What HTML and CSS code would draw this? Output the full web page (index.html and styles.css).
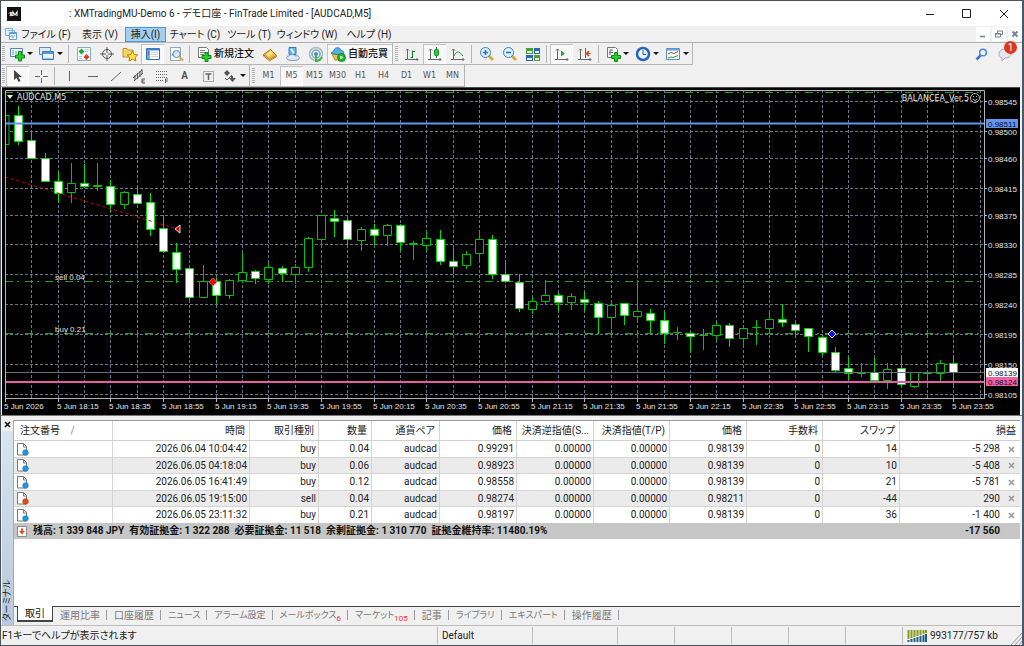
FILE: index.html
```html
<!DOCTYPE html>
<html lang="ja">
<head>
<meta charset="utf-8">
<meta name="viewport" content="width=device-width, initial-scale=1">
<title>XMTradingMU-Demo 6 - デモ口座 - FinTrade Limited - [AUDCAD,M5]</title>
<link rel="stylesheet" href="styles.css">
</head>
<body>
<div class="window">
  <header class="titlebar">
    <svg class="app-logo" width="14" height="14" viewBox="0 0 14 14" aria-hidden="true"><rect width="14" height="14" fill="#111"/><path d="M3 5l2 4M5 5L3 9M6 9V5l2 3 2-3v4" stroke="#eee" stroke-width="1.2" fill="none"/><path d="M1 6.500h2" stroke="#e22"/></svg>
    <h1 class="title">: XMTradingMU-Demo 6 - デモ口座 - FinTrade Limited - [AUDCAD,M5]</h1>
    <div class="caption">
      <button aria-label="最小化"><svg width="10" height="10" viewBox="0 0 10 10"><path d="M1 5.500h8" stroke="#222"/></svg></button>
      <button aria-label="最大化"><svg width="10" height="10" viewBox="0 0 10 10"><path d="M.5.5h8v8h-8z" stroke="#222" fill="none"/></svg></button>
      <button aria-label="閉じる"><svg width="10" height="10" viewBox="0 0 10 10"><path d="M1 1l8 8M9 1L1 9" stroke="#222"/></svg></button>
    </div>
  </header>

  <nav class="menubar">
    <svg width="12" height="12" viewBox="0 0 12 12" aria-hidden="true"><path d="M.5.5h7v7h-7zM2.500 2.500h7v7" fill="#eaf4fd" stroke="#7ab0e4"/><path d="M4.500 4.500h7v7h-7z" fill="#fff" stroke="#5b9be0"/><path d="M4 5.500h8" stroke="#5b9be0"/><path d="M5.500 9l1.500-2 1 3 2-3" stroke="#7ab0e4" fill="none"/></svg>
    <button class="menu-item wide">ファイル (F)</button>
    <button class="menu-item">表示 (V)</button>
    <button class="menu-item active">挿入(I)</button>
    <button class="menu-item wide">チャート (C)</button>
    <button class="menu-item">ツール (T)</button>
    <button class="menu-item widest">ウィンドウ (W)</button>
    <button class="menu-item wide">ヘルプ (H)</button>
    <div class="mdi">
      <button aria-label="チャートを最小化"><svg width="8" height="8" viewBox="0 0 8 8"><path d="M1 6.500h5" stroke="#6d7f92" stroke-width="1.500"/></svg></button>
      <button aria-label="チャートを元に戻す"><svg width="8" height="8" viewBox="0 0 8 8"><path d="M2.500 3V1h5v3.500H6M.5 3.500h5v3.500h-5zM.5 4h5" stroke="#6d7f92" fill="none"/></svg></button>
      <button aria-label="チャートを閉じる"><svg width="8" height="8" viewBox="0 0 8 8"><path d="M1.500 1.500l5 5M6.500 1.500l-5 5" stroke="#6d7f92" stroke-width="1.800"/></svg></button>
    </div>
  </nav>

  <div class="toolrow">
    <div class="toolbar">
      <span class="grip"></span>
      <button class="tool drop" aria-label="新規チャート"><svg width="16" height="16" viewBox="0 0 16 16"><path d="M1.500 2.500h12v8h-12z" fill="#eef5fb" stroke="#5685b8"/><path d="M4 9V4M7 8V5" stroke="#68a0cc"/><path d="M9.500 5.500h3v3.500h3v3h-3v3h-3v-3h-3v-3h3z" fill="#27d02c" stroke="#0b8a12"/></svg><i class="arrow"></i></button>
      <button class="tool drop" aria-label="表示プロファイル"><svg width="16" height="16" viewBox="0 0 16 16"><path d="M.5 1.500h11v7h-11z" fill="#dcebf8" stroke="#5a8cc0"/><path d="M3.500 5.500h11v8h-11z" fill="#e9f3fb" stroke="#4679b2"/><path d="M4 7h10" stroke="#4d9ee0" stroke-width="2"/><path d="M4 12.500h10" stroke="#a7c1da"/></svg><i class="arrow"></i></button>
      <span class="sep"></span>
      <button class="tool" aria-label="気配値表示"><svg width="16" height="16" viewBox="0 0 16 16"><path d="M1.500 1.500h13v13h-13z" fill="#f8fcff" stroke="#8aaccc"/><path d="M5.500 2.500l3 3-3 3-3-3z" fill="#22a83a"/><path d="M10.500 8l3 3-3 3-3-3z" fill="#e23b21"/><path d="M9 3.500h4M9 5.500h3M3 10.500h3M3 12.500h3" stroke="#b9cee2"/></svg></button>
      <button class="tool" aria-label="データウィンドウ"><svg width="16" height="16" viewBox="0 0 16 16"><circle cx="8" cy="8" r="4.500" fill="none" stroke="#555"/><path d="M8 1v6M8 9v6M1 8h6M9 8h6" stroke="#555"/></svg></button>
      <button class="tool" aria-label="ナビゲーター"><svg width="16" height="16" viewBox="0 0 16 16"><path d="M1 2.500h4l1 1.500h5v7H1z" fill="#f7d46c" stroke="#c39421"/><path d="M10.500 5l1.700 3.500 3.500.4-2.600 2.500.8 3.600-3.400-1.800L7 15l.8-3.600-2.600-2.500 3.500-.4z" fill="#ffe04d" stroke="#b97d08"/></svg></button>
      <button class="tool pressed" aria-label="ターミナル"><svg width="16" height="16" viewBox="0 0 16 16"><path d="M1.500 2.500h13v11h-13z" fill="#fff" stroke="#2f6fb4"/><path d="M2 3.500h12" stroke="#3d86cf" stroke-width="2"/><path d="M2 4h3v9H2z" fill="#69aee8"/><path d="M6 6.500h7M6 8.500h7M6 10.500h7" stroke="#c8d8ea"/><path d="M3 6h1M3 8h1" stroke="#b11"/></svg></button>
      <button class="tool" aria-label="ストラテジーテスター"><svg width="16" height="16" viewBox="0 0 16 16"><path d="M2.500 1.500h10v13h-10z" fill="#f6fafc" stroke="#92a5b8"/><path d="M4 10l2-5 2 3 2-4" stroke="#78a58c" fill="none"/><circle cx="8.500" cy="8" r="3.500" fill="#cfe5f8" fill-opacity=".8" stroke="#6a96c4"/><path d="M11 10.500l4 4" stroke="#d9aa35" stroke-width="2"/></svg></button>
      <span class="sep"></span>
      <button class="tool labelled"><svg width="16" height="16" viewBox="0 0 16 16" aria-hidden="true"><path d="M2.500 1.500h8l2 2v8h-10z" fill="#fff" stroke="#777"/><path d="M4 4.500h5M4 6.500h6M4 8.500h4" stroke="#888"/><path d="M9 6.500h3v3h3v3h-3v3H9v-3H6v-3h3z" fill="#27d02c" stroke="#0b8a12"/></svg>新規注文</button>
      <button class="tool" aria-label="メタエディター"><svg width="16" height="16" viewBox="0 0 16 16"><path d="M1.500 8.500l6 5 7-4-6-6z" fill="#f3ba3c" stroke="#a86d10"/><path d="M1.500 8.500v1.500l6 5 7-4.500V9" fill="none" stroke="#b98120"/><path d="M4 8.500l4.500-4L11 7 7.500 11z" fill="#fde18e"/></svg></button>
      <button class="tool" aria-label="仮想ホスティング"><svg width="16" height="16" viewBox="0 0 16 16"><path d="M4 1.500h7v7H4z" fill="#6cb3ee" stroke="#3879c0"/><path d="M6 3l3 4" stroke="#e4f3ff" stroke-width="2"/><path d="M2 13c-1-2 0-3 2-3 1-2 5-2 6 0 3-1 5 1 4 3-1 2-11 2-12 0z" fill="#dfe9f3" stroke="#7b9cc0"/></svg></button>
      <button class="tool" aria-label="シグナル"><svg width="16" height="16" viewBox="0 0 16 16" fill="none"><circle cx="8" cy="8" r="6.500" stroke="#a5b9c8" stroke-width="1.500"/><circle cx="8" cy="8" r="4" stroke="#7da2bd" stroke-width="1.500"/><circle cx="8" cy="8" r="2" fill="#4c8bc0"/><path d="M8 9v6c3 0 5-2 6-4" stroke="#40b34c" stroke-width="2"/></svg></button>
      <button class="tool labelled pressed"><svg width="16" height="16" viewBox="0 0 16 16" aria-hidden="true"><path d="M2 8h10l-2 6H5z" fill="#f3c53d" stroke="#bc8a1c"/><path d="M1 7c1-1 3-1 3-3 1-3 6-3 7 0 0 1 3 1 3 3-3 2-10 2-13 0z" fill="#57b1dc" stroke="#2c7ca8"/><circle cx="11.500" cy="11.500" r="4" fill="#22b52e" stroke="#138a1d"/><path d="M10.300 9.500v4l3-2z" fill="#fff"/></svg>自動売買</button>
    </div>
    <div class="toolbar">
      <span class="grip"></span>
      <button class="tool" aria-label="バーチャート"><svg width="16" height="16" viewBox="0 0 16 16" fill="none"><path d="M3.500 3v10.500H14M2 4.500L3.500 3 5 4.500M12.500 12l1.500 1.500-1.500 1.500M3.500 13.500H1" stroke="#666"/><path d="M8.500 11.500h-2M8.500 12V4.500M8.500 5.500h2.500" stroke="#168b25" stroke-width="1.200"/></svg></button>
      <button class="tool pressed" aria-label="ローソク足"><svg width="16" height="16" viewBox="0 0 16 16" fill="none"><path d="M3.500 3v10.500H14M2 4.500L3.500 3 5 4.500M12.500 12l1.500 1.500-1.500 1.500M3.500 13.500H1" stroke="#666"/><path d="M9.500 1v11" stroke="#168b25"/><rect x="7.500" y="3.500" width="4" height="6" rx="1" fill="#2fca3a" stroke="#168b25"/></svg></button>
      <button class="tool" aria-label="ラインチャート"><svg width="16" height="16" viewBox="0 0 16 16" fill="none"><path d="M3.500 3v10.500H14M2 4.500L3.500 3 5 4.500M12.500 12l1.500 1.500-1.500 1.500M3.500 13.500H1" stroke="#666"/><path d="M4 10c3-6 5-5 9 0" stroke="#2f9c3a"/></svg></button>
      <span class="sep"></span>
      <button class="tool" aria-label="拡大"><svg width="16" height="16" viewBox="0 0 16 16"><path d="M10 10l4 4" stroke="#d9ac36" stroke-width="3"/><circle cx="6.500" cy="6.500" r="5" fill="#d9effd" stroke="#3c83c4"/><path d="M4 6.500h5M6.500 4v5" stroke="#2b6fb5" stroke-width="1.500"/></svg></button>
      <button class="tool" aria-label="縮小"><svg width="16" height="16" viewBox="0 0 16 16"><path d="M10 10l4 4" stroke="#d9ac36" stroke-width="3"/><circle cx="6.500" cy="6.500" r="5" fill="#d9effd" stroke="#3c83c4"/><path d="M4 6.500h5" stroke="#2b6fb5" stroke-width="1.500"/></svg></button>
      <button class="tool" aria-label="整列"><svg width="16" height="16" viewBox="0 0 16 16"><path d="M1 2h7v6H1zM9 9h6v6H9z" fill="#4a9f35"/><path d="M9 2h6v6H9zM1 9h7v6H1z" fill="#3062b8"/><path d="M2 5h5v2H2zM10 5h4v2h-4zM2 12h5v2H2zM10 12h4v2h-4z" fill="#e3f3e3"/></svg></button>
      <span class="sep"></span>
      <button class="tool pressed" aria-label="自動スクロール"><svg width="16" height="16" viewBox="0 0 16 16" fill="none"><path d="M3.500 3v10.500H14M2 4.500L3.500 3 5 4.500M12.500 12l1.500 1.500-1.500 1.500M3.500 13.500H1" stroke="#666"/><path d="M7 4.500v6l4-3z" fill="#24a836"/></svg></button>
      <button class="tool" aria-label="チャートシフト"><svg width="16" height="16" viewBox="0 0 16 16" fill="none"><path d="M3.500 3v10.500H14M2 4.500L3.500 3 5 4.500M12.500 12l1.500 1.500-1.500 1.500M3.500 13.500H1" stroke="#666"/><path d="M8.500 2v10" stroke="#336fae"/><path d="M9.500 7.500h4M12 5l-2.500 2.500L12 10" stroke="#cf4a22" stroke-width="1.500"/></svg></button>
      <span class="sep"></span>
      <button class="tool drop" aria-label="インディケータ"><svg width="16" height="16" viewBox="0 0 16 16"><path d="M2.500 1.500h8l2 2v8h-10z" fill="#fff" stroke="#777"/><path d="M5 9V4h3M4 6.500h4" stroke="#666" fill="none"/><path d="M9.500 6.500h3v3h3v3h-3v3h-3v-3h-3v-3h3z" fill="#27d02c" stroke="#0b8a12"/></svg><i class="arrow"></i></button>
      <button class="tool drop" aria-label="時間足設定"><svg width="16" height="16" viewBox="0 0 16 16"><circle cx="8" cy="8" r="6" fill="#e9f3fc" stroke="#2167b8" stroke-width="2.500"/><path d="M8 4v4.500h3" stroke="#456" fill="none"/></svg><i class="arrow"></i></button>
      <button class="tool drop" aria-label="定型チャート"><svg width="16" height="16" viewBox="0 0 16 16"><path d="M1.500 2.500h13v11h-13z" fill="#f5f9fc" stroke="#5c8fbe"/><path d="M2 3.500h12" stroke="#5ba0dc" stroke-width="2"/><path d="M3 8l3-1.500 3 1 4-2" stroke="#b4473a" fill="none"/><path d="M3 12l3-1 2 .500 5-2" stroke="#3c9a4d" fill="none"/></svg><i class="arrow"></i></button>
    </div>
    <div class="notices">
      <button aria-label="検索"><svg width="13" height="13" viewBox="0 0 13 13"><path d="M5.500 7.500L1.500 11.500" stroke="#3b74d0" stroke-width="2.500"/><circle cx="8" cy="4.500" r="3.300" fill="#eef6ff" stroke="#4d86dc" stroke-width="1.500"/></svg></button>
      <button class="bell" aria-label="通知 1件"><svg width="14" height="14" viewBox="0 0 14 14"><path d="M1 7c0-3 3-5 6-5s6 2 6 5-3 4-6 4l-3 3v-3C2 10 1 9 1 7z" fill="#e6e6ee" stroke="#aaa9b5"/></svg><span class="badge">1</span></button>
    </div>
  </div>

  <div class="toolrow">
    <div class="toolbar">
      <span class="grip"></span>
      <button class="tool pressed" aria-label="カーソル"><svg width="16" height="16" viewBox="0 0 16 16"><path d="M4 2v10l2.500-2.300L8.500 14l2-1-2-4H12z" fill="#444"/></svg></button>
      <button class="tool" aria-label="十字カーソル"><svg width="16" height="16" viewBox="0 0 16 16"><path d="M8.500 2v5M8.500 10v5M2 8.500h5M10 8.500h5" stroke="#666"/></svg></button>
      <span class="sep"></span>
      <button class="tool" aria-label="垂直線"><svg width="16" height="16" viewBox="0 0 16 16"><path d="M7.500 3v10" stroke="#666"/></svg></button>
      <button class="tool" aria-label="水平線"><svg width="16" height="16" viewBox="0 0 16 16"><path d="M3 8.500h10" stroke="#666"/></svg></button>
      <button class="tool" aria-label="トレンドライン"><svg width="16" height="16" viewBox="0 0 16 16"><path d="M3 13L13 4" stroke="#666"/></svg></button>
      <button class="tool" aria-label="チャネル"><svg width="16" height="16" viewBox="0 0 16 16" fill="none" stroke="#555"><path d="M2 10l9-8M3 13l9-8M4 7v5M6.500 5v6M9 3v6M11 1v5"/><path d="M14 11h-3v4h3M11 13h2.500"/></svg></button>
      <button class="tool" aria-label="フィボナッチ"><svg width="16" height="16" viewBox="0 0 16 16" fill="none" stroke="#666"><path d="M2 3.500h12M2 6.500h12M2 9.500h12M2 12.500h8" stroke-dasharray="1 1"/><path d="M11.500 15v-4H14M11.500 13H14"/></svg></button>
      <button class="tool letter" aria-label="テキスト">A</button>
      <button class="tool" aria-label="テキストラベル"><svg width="16" height="16" viewBox="0 0 16 16" fill="none" stroke="#666"><path d="M3.500 3.500h10v10h-10z" stroke-dasharray="1 1"/><path d="M5.500 6h6M8.500 6v6" stroke-width="1.500"/></svg></button>
      <button class="tool drop" aria-label="矢印"><svg width="16" height="16" viewBox="0 0 16 16"><path d="M5 2l3 3-3 3-3-3zM11 8v2h3l-3.500 4L7 10h2V8z" fill="#555"/><path d="M3 10l2 2 5-5" stroke="#555" fill="none"/></svg><i class="arrow"></i></button>
    </div>
    <div class="toolbar periods">
      <span class="grip"></span>
      <button class="tool">M1</button>
      <button class="tool pressed">M5</button>
      <button class="tool">M15</button>
      <button class="tool">M30</button>
      <button class="tool">H1</button>
      <button class="tool">H4</button>
      <button class="tool">D1</button>
      <button class="tool">W1</button>
      <button class="tool">MN</button>
    </div>
  </div>

  <main class="chart">
    <svg id="chart" viewBox="2 88 1018 327" role="img" aria-label="AUDCAD,M5"></svg>
  </main>

  <section class="terminal">
    <aside class="side">
      <button class="side-close" aria-label="ターミナルを閉じる"><svg width="7" height="7" viewBox="0 0 7 7"><path d="M1 1l5 5M6 1L1 6" stroke="#111" stroke-width="1.600"/></svg></button>
      <span class="side-title">ターミナル</span>
    </aside>
    <div class="panel">
      <div class="orders">
        <table>
          <colgroup><col class="c-id"><col class="c-time"><col class="c-type"><col class="c-vol"><col class="c-pair"><col class="c-num"><col class="c-num"><col class="c-fee"><col class="c-num"><col class="c-fee"><col class="c-num"><col></colgroup>
          <thead>
            <tr><th>注文番号 <span class="sort">/</span></th><th>時間</th><th>取引種別</th><th>数量</th><th>通貨ペア</th><th>価格</th><th>決済逆指値(S...</th><th>決済指値(T/P)</th><th>価格</th><th>手数料</th><th>スワップ</th><th>損益</th></tr>
          </thead>
          <tbody id="orders"></tbody>
          <tfoot>
            <tr><td colspan="11"><svg class="doc" width="12" height="13" viewBox="0 0 12 13" aria-hidden="true"><path d="M1.500 1.500h9v10h-9z" fill="#fff" stroke="#8a8a8a"/><path d="M6 9.500L3 6h2V3.500h2V6h2z" fill="#e2501e"/></svg><span>残高: 1 339 848 JPY</span><span>有効証拠金: 1 322 288</span><span>必要証拠金: 11 518</span><span>余剰証拠金: 1 310 770</span><span>証拠金維持率: 11480.19%</span></td><td class="profit">-17 560</td></tr>
          </tfoot>
        </table>
      </div>
      <div class="tabs" role="tablist">
        <button role="tab" aria-selected="true" class="tab current">取引</button>
        <button role="tab" class="tab">運用比率</button>
        <button role="tab" class="tab">口座履歴</button>
        <button role="tab" class="tab kana">ニュース</button>
        <button role="tab" class="tab kana">アラーム設定</button>
        <button role="tab" class="tab kana">メールボックス<sub>6</sub></button>
        <button role="tab" class="tab kana">マーケット<sub>105</sub></button>
        <button role="tab" class="tab">記事</button>
        <button role="tab" class="tab kana">ライブラリ</button>
        <button role="tab" class="tab kana">エキスパート</button>
        <button role="tab" class="tab">操作履歴</button>
      </div>
    </div>
  </section>

  <footer class="status">
    <span class="help">F1キーでヘルプが表示されます</span>
    <span class="cell w-l">Default</span>
    <span class="cell w-m"></span>
    <span class="cell w-s"></span>
    <span class="cell w-s"></span>
    <span class="cell w-s"></span>
    <span class="cell w-s"></span>
    <span class="cell w-s"></span>
    <span class="cell net"><svg width="20" height="12" viewBox="0 0 20 12" aria-hidden="true"><path d="M1.500 0v9M4.500 0v8M7.500 0v7M10.500 0v6M13.500 0v5M16.500 0v4M19 0v3" stroke="#8a9a1c" stroke-width="2"/><path d="M1.500 10v2M4.500 9v3M7.500 8v4M10.500 7v5M13.500 6v6M16.500 5v7M19 4v8" stroke="#1f5f86" stroke-width="2"/></svg>993177/757 kb</span>
    <svg class="resize" width="12" height="13" viewBox="0 0 12 13" aria-hidden="true"><path d="M1 13L12 1M5 13l7-8M9 13l3-4" stroke="#999"/></svg>
  </footer>
</div>
<script src="chart.js"></script>
</body>
</html>
```

FILE: styles.css
```css
* { box-sizing: border-box; }

body {
  margin: 0;
  background: #f0f0f0;
  color: #222;
  font-family: Roboto, "Noto Sans CJK JP", sans-serif;
  font-size: 10px;
  line-height: 14px;
  font-feature-settings: "palt";
}

button {
  margin: 0;
  padding: 0;
  border: 0;
  background: none;
  color: inherit;
  font: inherit;
  font-feature-settings: inherit;
  white-space: nowrap;
}

svg { display: block; flex: none; }

.window {
  display: flex;
  flex-direction: column;
  min-height: 100vh;
  border: 1px solid #4a525c;
  border-right: 2px solid #47596b;
  background: #f0f0f0;
}

/* Title bar */
.titlebar {
  display: flex;
  align-items: center;
  height: 25px;
  padding-left: 6px;
  background: #fff;
}
.title {
  flex: 1;
  margin: 0 0 0 48px;
  font-size: 10px;
  font-weight: 400;
  white-space: nowrap;
}
.caption { display: flex; }
.caption button {
  display: grid;
  place-items: center;
  width: 37px;
  height: 24px;
}

/* Menu */
.menubar {
  display: flex;
  align-items: center;
  height: 17px;
  padding-left: 4px;
  border-bottom: 1px solid #b0b0b0;
}
.menu-item {
  width: 50px;
  height: 15px;
  line-height: 13px;
}
.menu-item.wide { width: 58px; }
.menu-item.widest { width: 66px; }
.menu-item.active {
  width: 41px;
  border: 1px solid #4a9bdc;
  background: #a5cdee;
}
.mdi { display: flex; gap: 2px; margin-left: auto; }
.mdi button {
  display: grid;
  place-items: center;
  width: 14px;
  height: 14px;
  background: #fff;
}

/* Tool bars */
.toolrow { display: flex; height: 22px; }
.toolbar {
  display: flex;
  align-items: center;
  padding-left: 1px;
  border-right: 1px solid #b5b5b5;
  border-bottom: 1px solid #b5b5b5;
}
.grip {
  width: 3px;
  height: 16px;
  margin: 0 1px 0 0;
  background: repeating-linear-gradient(#b2b2b2 0 1px, #f0f0f0 1px 2px);
}
.toolbar + .toolbar .grip { margin: 0 2px 0 1px; }
.sep {
  width: 1px;
  height: 18px;
  margin: 0 3px 0 2px;
  background: #b5b5b5;
}
.tool {
  display: flex;
  align-items: center;
  justify-content: center;
  width: 23px;
  height: 20px;
}
.tool.drop { width: 30px; gap: 2px; }
.arrow {
  width: 5px;
  border: solid transparent;
  border-width: 3px 3px 0;
  border-top-color: #111;
}
.tool.labelled {
  width: auto;
  padding: 0 4px 0 3px;
  gap: 2px;
  color: #111;
  font-weight: 500;
}
.tool.pressed {
  background: #f8f8f8;
  box-shadow: inset 1px 1px #c2c2c2, inset -1px -1px #fff;
}
.tool.letter { color: #555; font-weight: 700; }
.periods .tool {
  color: #555;
  font-family: "DejaVu Sans", sans-serif;
  font-size: 8px;
}
.notices { display: flex; align-items: center; gap: 10px; margin-left: auto; padding-right: 10px; }
.bell { position: relative; }
.badge {
  position: absolute;
  top: -6px;
  left: 6px;
  width: 13px;
  height: 13px;
  border-radius: 50%;
  background: #e0341b;
  color: #fff;
  line-height: 13px;
}

/* Chart */
.chart {
  margin: 0 2px 0 1px;
  border-top: 1px solid #4c474b;
  background: #000;
}
#chart { width: 100%; height: auto; }
#chart text {
  fill: #e4e4e4;
  font-family: "Liberation Sans", sans-serif;
  font-size: 8px;
}
#chart .heading { font-family: "DejaVu Sans", sans-serif; }
#chart .dark { fill: #111; }
.grid { stroke: #66788a; stroke-dasharray: 3 2; }
.frame { fill: none; stroke: #b4b4b4; }
.level { stroke: #22a022; stroke-dasharray: 8 4 2 6; }
.candle { fill: #000; stroke: #00c400; }
.candle.down { fill: #fff; stroke: #00e000; }

/* Terminal */
.terminal {
  display: flex;
  flex: 1;
  padding: 4px 2px 0 1px;
  border-top: 1px solid #777;
}
.side {
  display: flex;
  flex-direction: column;
  justify-content: space-between;
  width: 12px;
  border-right: 1px solid #aaa;
  background: linear-gradient(#d9e6f2, #b9c8da);
}
.side-close { padding: 1px 2px 3px; background: #f0f0f0; }
.side-title {
  padding-top: 4px;
  font-size: 9px;
  line-height: 11px;
  writing-mode: vertical-rl;
  text-orientation: sideways;
  transform: rotate(180deg);
}
.panel { display: flex; flex: 1; flex-direction: column; min-width: 0; }
.orders { flex: 1; border-top: 1px solid #999; background: #fff; }
table {
  width: 100%;
  border-collapse: separate;
  border-spacing: 0;
  table-layout: fixed;
}
.c-id { width: 99px; }
.c-time { width: 137px; }
.c-type { width: 69px; }
.c-vol { width: 53px; }
.c-pair { width: 68px; }
.c-num { width: 77px; }
.c-fee { width: 76px; }
th, td {
  height: 16px;
  padding: 0 2px 0 0;
  overflow: hidden;
  border-right: 1px solid #d4d4d4;
  line-height: 14px;
  text-align: right;
  white-space: nowrap;
}
th {
  height: 20px;
  padding: 0 4px 0 0;
  border-bottom: 1px solid #d0d0d0;
  font-weight: 400;
}
th:first-child { padding-left: 6px; text-align: left; }
.sort { padding-left: 8px; color: #888; }
td:first-child { padding-left: 2px; text-align: left; }
th:last-child, td:last-child { border-right: 0; }
tbody tr:nth-child(even) td {
  height: 17px;
  border-top: 1px solid #d4d4d4;
  border-bottom: 1px solid #d4d4d4;
  background: #ebebeb;
}
.profit-cell { display: flex; align-items: center; justify-content: flex-end; gap: 8px; padding-right: 3px; }
tfoot td {
  border: 0;
  background: #c6c6c6;
  color: #111;
  font-weight: 700;
}
tfoot td:first-child > * { display: inline-block; vertical-align: middle; margin-right: 5px; }
tfoot .profit { padding-right: 20px; }

.tabs {
  display: flex;
  height: 19px;
  padding-left: 3px;
  border-top: 1px solid #444;
}
.tab {
  height: 16px;
  padding: 0 7px;
  color: #777;
  line-height: 15px;
  background: linear-gradient(#999, #999) right center / 1px 10px no-repeat;
}
.tab.kana { font-size: 9px; }
.tab.current {
  margin-top: -1px;
  border: solid #444;
  border-width: 0 1px 2px;
  background: #fff;
  color: #111;
}
.tab sub {
  color: #f03030;
  font-size: 8px;
  line-height: 8px;
  vertical-align: -3px;
}

/* Status bar */
.status {
  display: flex;
  align-items: center;
  height: 20px;
  padding-left: 1px;
  border-top: 1px solid #bbb;
}
.help { flex: 1; white-space: nowrap; }
.cell {
  display: flex;
  align-items: center;
  height: 17px;
  padding-left: 4px;
  border-left: 1px solid #bbb;
  white-space: nowrap;
}
.w-l { width: 95px; }
.w-m { width: 85px; }
.w-s { width: 57px; }
.net { width: 108px; gap: 3px; }
.resize { align-self: flex-end; }
```

FILE: chart.js
```js
const NS = 'http://www.w3.org/2000/svg';
const chart = document.getElementById('chart');

function add(tag, attrs, text) {
  const el = document.createElementNS(NS, tag);
  for (const [key, value] of Object.entries(attrs)) el.setAttribute(key, value);
  if (text) el.textContent = text;
  chart.append(el);
  return el;
}
const line = (x1, y1, x2, y2, attrs) => add('line', { x1, y1, x2, y2, ...attrs });

const LEFT = 5, RIGHT = 984, TOP = 90, BOTTOM = 398, STEP = 13.17;
const xAt = i => Math.round(LEFT + STEP * i) + 0.5;

// high, body top, body bottom, low, 1 = falling
const candles = [
  [112,115,144,158,0],[106,115,141,144,1],[133,140,158,158,1],[153,158,181,181,1],[172,181,193,202,1],
  [163,183,192,202,0],[164,183,186,187,1],[163,185,186,190,0],[180,186,204,211,1],[191,192,204,208,0],
  [186,194,203,203,1],[193,202,229,235,1],[217,228,251,251,1],[243,252,269,282,1],[268,268,297,300,1],
  [265,281,297,297,0],[278,281,295,303,1],[279,280,295,298,0],[253,272,280,282,0],[270,271,278,283,1],
  [263,267,279,283,0],[266,268,273,281,1],[264,267,274,283,0],[237,238,267,271,0],[215,215,239,246,0],
  [210,218,221,236,1],[218,220,239,244,1],[227,229,240,250,0],[224,229,235,244,1],[224,225,235,245,0],
  [224,225,242,250,1],[241,243,244,259,0],[231,238,245,250,0],[230,239,261,264,1],[248,261,266,273,1],
  [251,254,265,268,0],[233,239,253,259,0],[235,239,274,278,1],[263,274,281,281,1],[274,282,308,311,1],
  [297,301,309,313,0],[280,295,301,303,0],[293,295,302,310,1],[293,296,302,309,0],[292,299,302,310,1],
  [301,303,317,333,1],[302,305,317,328,0],[303,303,315,324,1],[281,311,316,321,0],[309,313,320,332,1],
  [312,320,333,343,1],[327,332,332,339,0],[332,333,336,352,1],[329,335,335,349,0],[322,325,335,339,0],
  [323,325,338,346,1],[326,328,338,345,0],[320,327,327,344,0],[312,319,328,333,0],[304,319,322,326,1],
  [322,324,330,337,1],[328,328,336,351,1],[335,337,352,354,1],[347,352,370,372,1],[357,368,373,379,1],
  [363,373,373,376,0],[358,372,380,380,1],[363,369,380,388,0],[357,368,384,385,1],[372,372,386,387,0],
  [370,373,373,384,0],[360,363,373,381,0],[357,363,372,384,1]
];

const prices = [
  ['0.98545',101],['0.98500',131],['0.98460',158],['0.98415',188],['0.98375',215],['0.98330',244],
  ['0.98285',274],['0.98240',304],['0.98195',334],['0.98150',364],['0.98105',394]
];
const times = ['2026','18:15','18:35','18:55','19:15','19:35','19:55','20:15','20:35','20:55','21:15',
  '21:35','21:55','22:15','22:35','22:55','23:15','23:35','23:55'];

// Grid and scales
add('rect', { x: 2, y: 88, width: 1018, height: 327, fill: '#000' });
for (let i = 2; i <= 74; i += 2) line(xAt(i), TOP, xAt(i), BOTTOM, { class: 'grid' });
for (const [label, y] of prices) {
  line(LEFT, y + 0.5, RIGHT, y + 0.5, { class: 'grid' });
  line(RIGHT, y + 0.5, RIGHT + 3, y + 0.5, { class: 'frame' });
  add('text', { x: 988, y: y + 4 }, label);
}
times.forEach((t, n) => {
  const x = xAt(n * 4);
  line(x, BOTTOM, x, BOTTOM + 4, { class: 'frame' });
  add('text', { x: x - 1.5, y: 409 }, '5 Jun ' + t);
});

// Order levels
for (const y of [92.5, 281.5, 333.5]) line(LEFT, y, RIGHT, y, { class: 'level' });

// Candles
candles.forEach(([high, top, bottom, low, down], i) => {
  const x = xAt(i);
  const cls = down ? 'candle down' : 'candle';
  line(x, high, x, low + 1, { class: cls });
  const d = i === 0
    ? `M5 ${top + 0.5}h4V${bottom + 0.5}h-4`
    : `M${x - 4} ${top + 0.5}h8V${bottom + 0.5}h-8z`;
  add('path', { d, class: cls });
});

// Price lines
line(LEFT, 123.5, RIGHT, 123.5, { stroke: '#6495ed', 'stroke-width': 2 });
line(LEFT, 372.5, RIGHT, 372.5, { stroke: '#5f7080' });
line(LEFT, 382, RIGHT, 382, { stroke: '#e85ca4', 'stroke-width': 2 });

// Closed trade and entry markers
line(5, 177, 177, 229, { stroke: '#d00000', 'stroke-dasharray': '3 3' });
add('path', { d: 'M175 229l5-4v8z', fill: '#e00', stroke: '#ddd' });
add('path', { d: 'M213 278l4 4-4 4-4-4z', fill: '#e00', stroke: '#eaa', 'stroke-width': 0.5 });
add('path', { d: 'M832 330l4 4-4 4-4-4z', fill: '#11f', stroke: '#ddd' });
add('text', { x: 55, y: 280 }, 'sell 0.04');
add('text', { x: 55, y: 332 }, 'buy 0.21');

// Frame, headings and price tags
add('path', { d: 'M5.5 90.5V398.500H984.5V90.5z', class: 'frame' });
add('path', { d: 'M7 95h6l-3 4z', fill: '#eee' });
add('text', { x: 17, y: 100, class: 'heading' }, 'AUDCAD,M5');
add('text', { x: 969, y: 101, class: 'heading', 'text-anchor': 'end' }, 'BALANCEA_Ver.5');
add('circle', { cx: 975, cy: 98, r: 4.5, class: 'frame' });
add('path', { d: 'M972.5 99q2.500 3 5 0M973.500 96v1M976.500 96v1', class: 'frame' });
for (const [label, y, fill, cls] of [
  ['0.98511', 123, '#6495ed', 'dark'], ['0.98139', 372, '#fff', 'dark'], ['0.98124', 381, '#f060a8', 'dark']
]) {
  add('rect', { x: 986, y: y - 4, width: 32, height: 9, fill });
  add('text', { x: 988, y: y + 4, class: cls }, label);
}

// Open orders
const orders = [
  ['2026.06.04 10:04:42','buy','0.04','0.99291','0.98139','14','-5 298'],
  ['2026.06.05 04:18:04','buy','0.06','0.98923','0.98139','10','-5 408'],
  ['2026.06.05 16:41:49','buy','0.12','0.98558','0.98139','21','-5 781'],
  ['2026.06.05 19:15:00','sell','0.04','0.98274','0.98211','-44','290'],
  ['2026.06.05 23:11:32','buy','0.21','0.98197','0.98139','36','-1 400']
];
document.getElementById('orders').innerHTML = orders.map(([time, type, volume, open, now, swap, profit]) => `
  <tr>
    <td><svg width="13" height="13" viewBox="0 0 13 13"><path d="M1.500 .5h6l3 3v8.500h-9z" fill="#fff" stroke="#777"/><path d="M7.500 1v3h3" fill="none" stroke="#777"/><circle cx="9.500" cy="9.500" r="2.800" fill="${type === 'buy' ? '#2196e0' : '#e04a1c'}" stroke="${type === 'buy' ? '#1673b8' : '#b03410'}" stroke-width=".6"/></svg></td>
    <td>${time}</td><td>${type}</td><td>${volume}</td><td>audcad</td><td>${open}</td>
    <td>0.00000</td><td>0.00000</td><td>${now}</td><td>0</td><td>${swap}</td>
    <td><div class="profit-cell">${profit}<button aria-label="決済"><svg width="7" height="7" viewBox="0 0 7 7"><path d="M1 1l5 5M6 1L1 6" stroke="#999" stroke-width="1.500"/></svg></button></div></td>
  </tr>`).join('');
```
